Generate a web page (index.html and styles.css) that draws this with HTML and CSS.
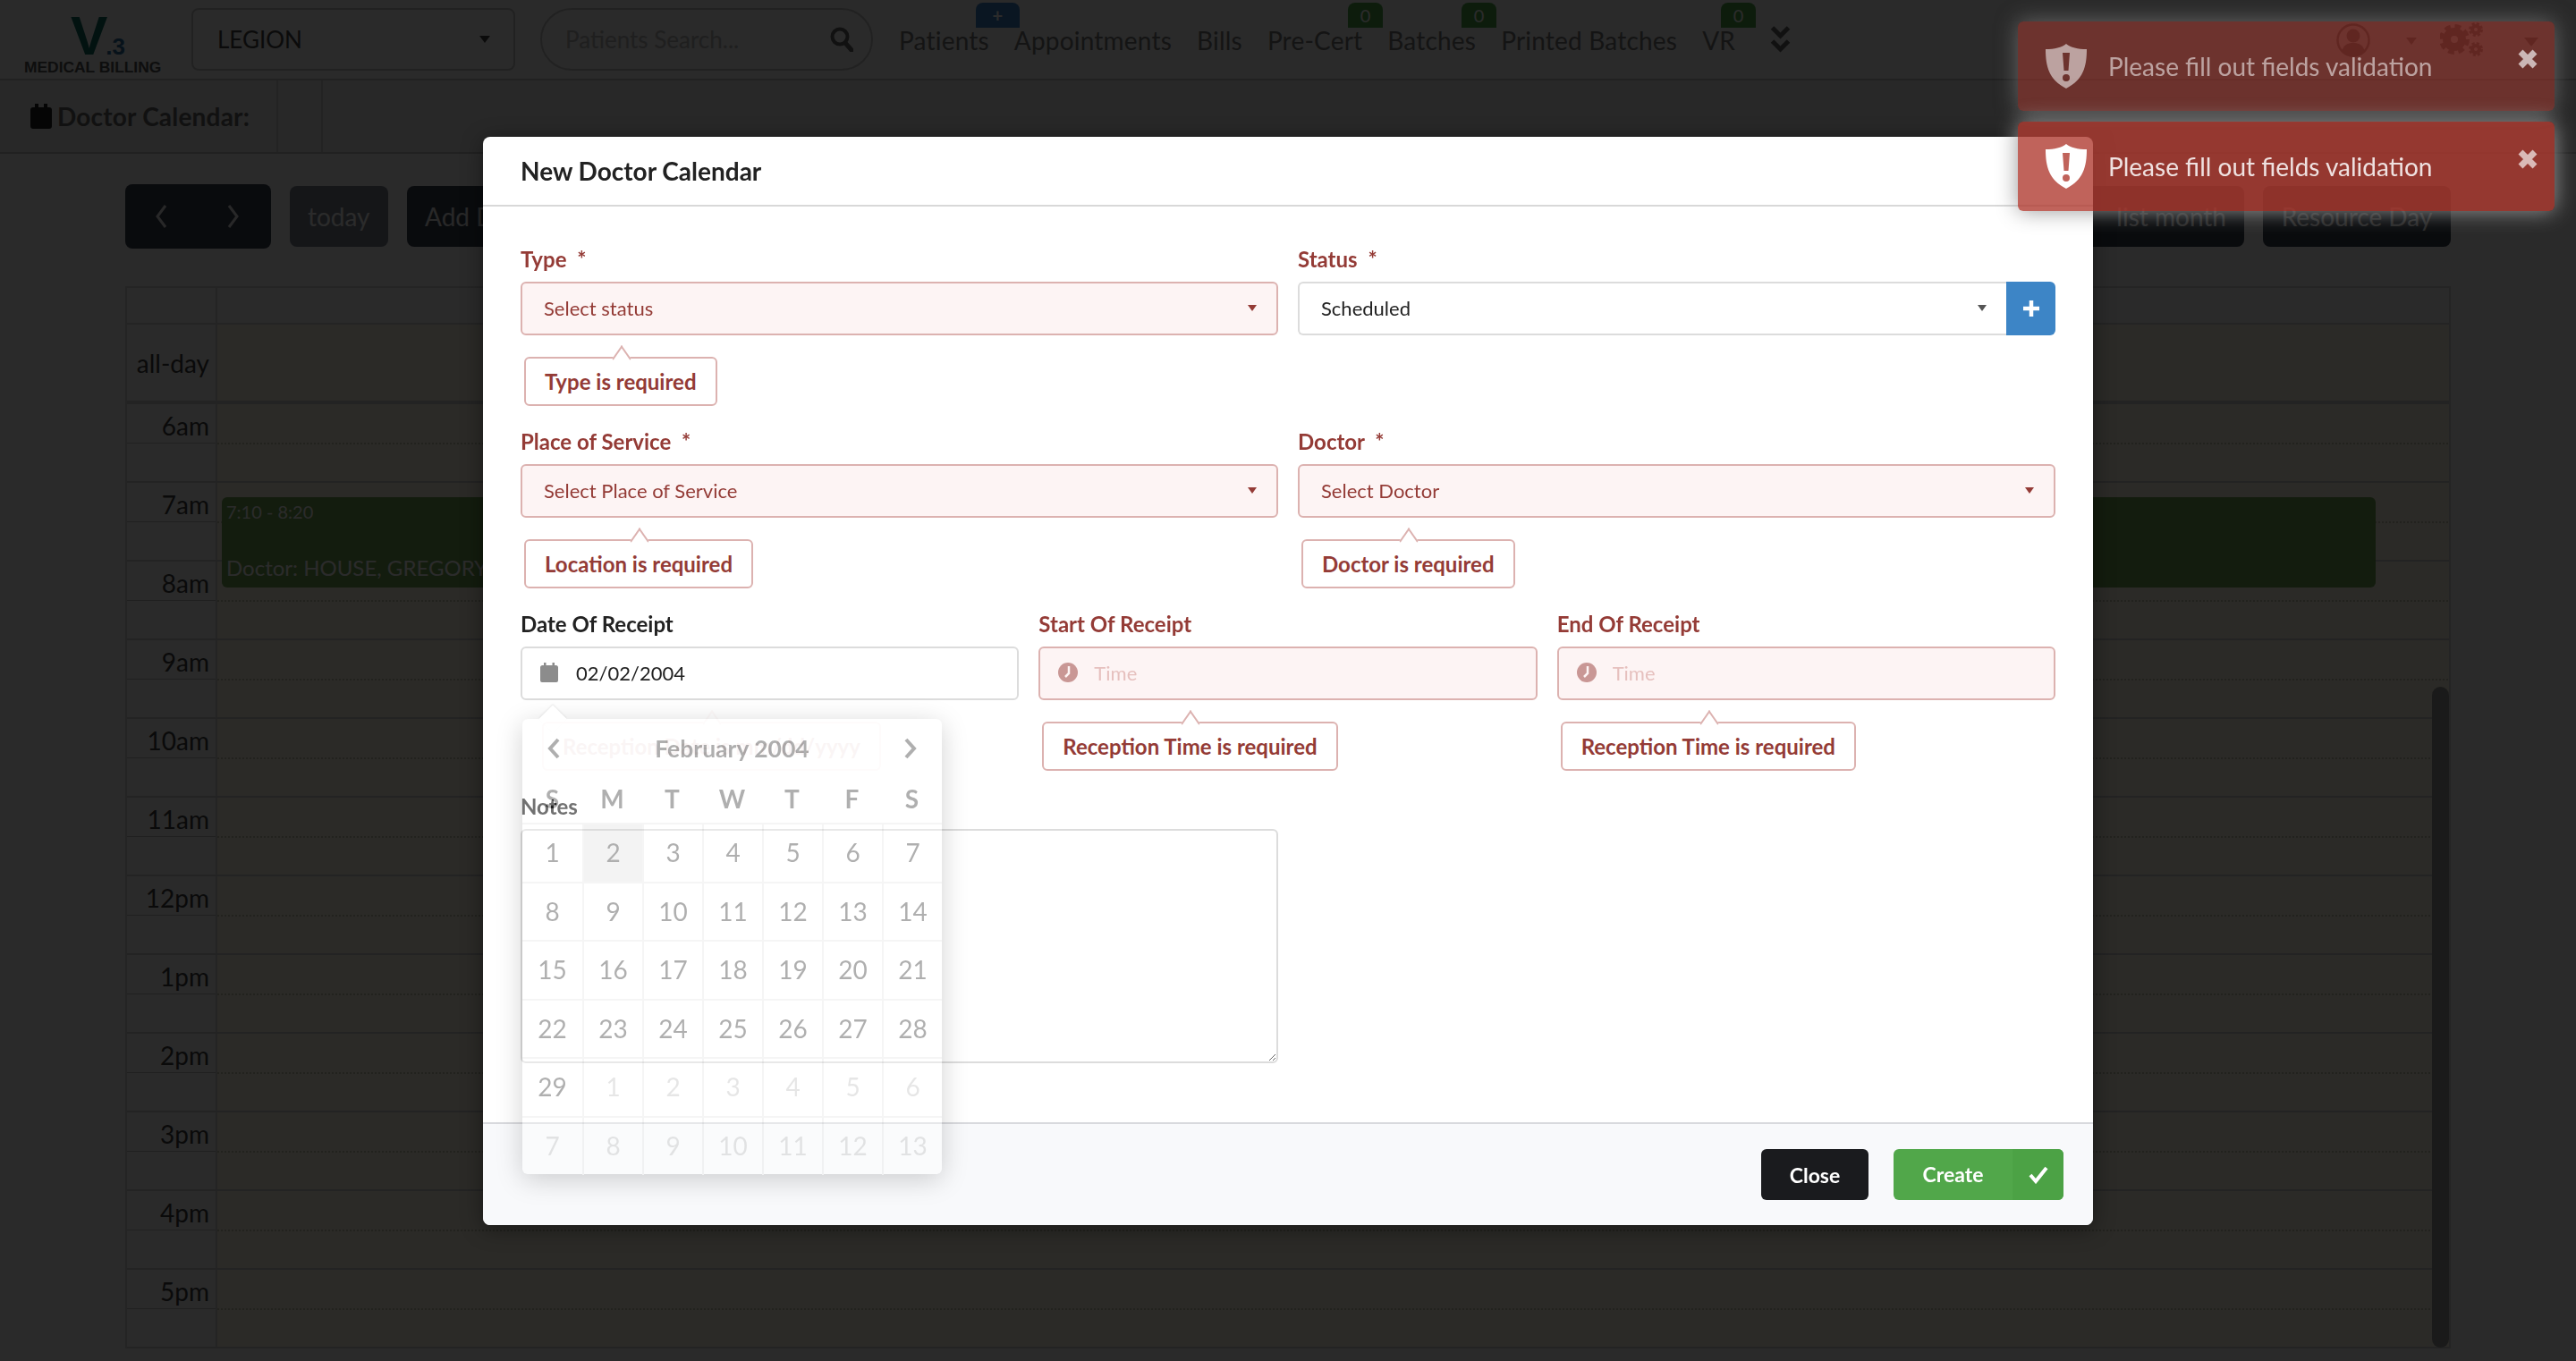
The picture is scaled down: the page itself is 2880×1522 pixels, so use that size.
FILE: index.html
```html
<!DOCTYPE html>
<html lang="en">

<head>
    <meta charset="UTF-8" />
    <title>Doctor Calendar</title>
    <link rel="stylesheet" href="styles.css">
</head>

<body>

    <!-- Top navigation -->
    <header class="topbar">
        <div class="logo">
            <div class="logo-mark">V<span class="logo-version">.3</span></div>
            <div class="logo-name">MEDICAL BILLING</div>
        </div>
        <div class="clinic-select">LEGION<span class="caret"></span></div>
        <div class="patient-search">
            <span>Patients Search...</span>
            <svg class="search-icon" viewBox="0 0 26 28"><circle cx="11" cy="11" r="8.5" fill="none" stroke="currentColor" stroke-width="4"/><path d="M17 18l7 8" stroke="currentColor" stroke-width="5" stroke-linecap="round"/></svg>
        </div>
        <nav class="main-nav">
            <a class="nav-item">Patients<span class="badge badge-blue">+</span></a>
            <a class="nav-item">Appointments</a>
            <a class="nav-item">Bills</a>
            <a class="nav-item">Pre-Cert<span class="badge badge-green">0</span></a>
            <a class="nav-item">Batches<span class="badge badge-green">0</span></a>
            <a class="nav-item">Printed Batches</a>
            <a class="nav-item">VR<span class="badge badge-green">0</span></a>
            <svg class="nav-more" viewBox="0 0 22 30"><path d="M2 2l9 9 9-9M2 17l9 9 9-9" fill="none" stroke="currentColor" stroke-width="5"/></svg>
        </nav>
        <div class="user-tools">
            <svg class="avatar" viewBox="0 0 38 38"><circle cx="19" cy="19" r="17.5" fill="none" stroke="currentColor" stroke-width="2.5"/><circle cx="19" cy="14" r="7.5" fill="currentColor"/><path d="M6 32c2-8 7-10 13-10s11 2 13 10c-7 6-19 6-26 0z" fill="currentColor"/></svg>
            <span class="caret caret-tools"></span>
            <svg class="gears" viewBox="0 0 48 38">
                <circle cx="16" cy="19" r="8.500" fill="none" stroke="currentColor" stroke-width="9"/>
                <circle cx="16" cy="19" r="14" fill="none" stroke="currentColor" stroke-width="6" stroke-dasharray="6.500 4.500"/>
                <circle cx="40" cy="8" r="4" fill="none" stroke="currentColor" stroke-width="4"/>
                <circle cx="40" cy="8" r="6.500" fill="none" stroke="currentColor" stroke-width="3" stroke-dasharray="3 2.100"/>
                <circle cx="40" cy="30" r="4" fill="none" stroke="currentColor" stroke-width="4"/>
                <circle cx="40" cy="30" r="6.500" fill="none" stroke="currentColor" stroke-width="3" stroke-dasharray="3 2.100"/>
            </svg>
            <span class="caret caret-gears"></span>
        </div>
    </header>

    <div class="subbar">
        <div class="subbar-title">
            <svg class="subbar-icon" viewBox="0 0 24 28"><path d="M5 0h4v4h6V0h4v4h2a3 3 0 0 1 3 3v18a3 3 0 0 1-3 3H3a3 3 0 0 1-3-3V7a3 3 0 0 1 3-3h2z" fill="currentColor"/></svg>
            Doctor Calendar:
        </div>
        <div class="subbar-cell"></div>
    </div>

    <!-- Calendar behind the dialog -->
    <main class="calendar-page">
        <div class="toolbar">
            <div class="toolbar-left">
                <div class="btn-pager">
                    <svg viewBox="0 0 14 28"><path d="M12 2L3 14l9 12" fill="none" stroke="currentColor" stroke-width="3"/></svg>
                    <svg viewBox="0 0 14 28"><path d="M2 2l9 12-9 12" fill="none" stroke="currentColor" stroke-width="3"/></svg>
                </div>
                <div class="cal-btn cal-btn-muted">today</div>
                <div class="cal-btn">Add Doctor Calendar</div>
            </div>
            <div class="toolbar-right">
                <div class="cal-btn cal-btn-month">list month</div>
                <div class="cal-btn cal-btn-resource">Resource Day</div>
            </div>
        </div>

        <div class="cal-grid">
            <div class="cal-head"><div class="axis"></div><div class="cal-head-day"></div></div>
            <div class="cal-allday"><div class="axis axis-allday">all-day</div><div class="today-col"></div></div>
            <div class="cal-divider"></div>
            <div class="cal-body">
                <div class="hour"><div class="axis">6am</div><div class="today-col"></div></div>
                <div class="hour"><div class="axis">7am</div><div class="today-col"></div></div>
                <div class="hour"><div class="axis">8am</div><div class="today-col"></div></div>
                <div class="hour"><div class="axis">9am</div><div class="today-col"></div></div>
                <div class="hour"><div class="axis">10am</div><div class="today-col"></div></div>
                <div class="hour"><div class="axis">11am</div><div class="today-col"></div></div>
                <div class="hour"><div class="axis">12pm</div><div class="today-col"></div></div>
                <div class="hour"><div class="axis">1pm</div><div class="today-col"></div></div>
                <div class="hour"><div class="axis">2pm</div><div class="today-col"></div></div>
                <div class="hour"><div class="axis">3pm</div><div class="today-col"></div></div>
                <div class="hour"><div class="axis">4pm</div><div class="today-col"></div></div>
                <div class="hour"><div class="axis">5pm</div><div class="today-col"></div></div>
                <div class="cal-event">
                    <div class="event-time">7:10 - 8:20</div>
                    <div class="event-title">Doctor: HOUSE, GREGORY</div>
                </div>
                <div class="cal-scroll"></div>
            </div>
        </div>
    </main>

    <div class="backdrop"></div>

    <!-- Dialog -->
    <section class="modal">
        <h2 class="modal-title">New Doctor Calendar</h2>

        <div class="modal-body">
            <div class="form-row">
                <div class="field has-error">
                    <label>Type <em>*</em></label>
                    <div class="control">Select status<span class="caret"></span></div>
                    <div class="field-tip">Type is required</div>
                </div>
                <div class="field">
                    <label class="label-error">Status <em>*</em></label>
                    <div class="control-group">
                        <div class="control">Scheduled<span class="caret"></span></div>
                        <div class="btn-add">
                            <svg viewBox="0 0 20 20"><path d="M10 1v18M1 10h18" stroke="currentColor" stroke-width="4.500"/></svg>
                        </div>
                    </div>
                </div>
            </div>

            <div class="form-row">
                <div class="field has-error">
                    <label>Place of Service <em>*</em></label>
                    <div class="control">Select Place of Service<span class="caret"></span></div>
                    <div class="field-tip">Location is required</div>
                </div>
                <div class="field has-error">
                    <label>Doctor <em>*</em></label>
                    <div class="control">Select Doctor<span class="caret"></span></div>
                    <div class="field-tip">Doctor is required</div>
                </div>
            </div>

            <div class="form-row form-row-3">
                <div class="field">
                    <label>Date Of Receipt</label>
                    <div class="control control-icon">
                        <svg class="field-icon" viewBox="0 0 20 22"><path d="M4 0h2.500v3h7V0H16v3h1.500A2.500 2.500 0 0 1 20 5.500V20a2 2 0 0 1-2 2H2a2 2 0 0 1-2-2V5.500A2.500 2.500 0 0 1 2.500 3H4z" fill="currentColor"/></svg>
                        02/02/2004
                    </div>
                    <div class="field-tip field-tip-hidden">Reception Date is mm/dd/yyyy</div>
                </div>
                <div class="field has-error">
                    <label>Start Of Receipt</label>
                    <div class="control control-icon control-time">
                        <svg class="field-icon clock-icon" viewBox="0 0 22 22"><circle cx="11" cy="11" r="11" fill="currentColor"/><path d="M12 4v8l-4 4" fill="none" stroke="#fdf4f4" stroke-width="2.500"/></svg>
                        Time
                    </div>
                    <div class="field-tip">Reception Time is required</div>
                </div>
                <div class="field has-error">
                    <label>End Of Receipt</label>
                    <div class="control control-icon control-time">
                        <svg class="field-icon clock-icon" viewBox="0 0 22 22"><circle cx="11" cy="11" r="11" fill="currentColor"/><path d="M12 4v8l-4 4" fill="none" stroke="#fdf4f4" stroke-width="2.500"/></svg>
                        Time
                    </div>
                    <div class="field-tip">Reception Time is required</div>
                </div>
            </div>

            <div class="form-row">
                <div class="field">
                    <label>Notes</label>
                    <textarea class="notes"></textarea>
                </div>
                <div class="field"></div>
            </div>
        </div>

        <footer class="modal-footer">
            <button class="btn-close">Close</button>
            <button class="btn-create">
                <span class="btn-create-label">Create</span>
                <span class="btn-create-icon">
                    <svg viewBox="0 0 22 20"><path d="M2 10l6 7L20 2" fill="none" stroke="currentColor" stroke-width="4"/></svg>
                </span>
            </button>
        </footer>

        <!-- Date picker, fading in -->
        <div class="datepicker">
            <div class="dp-head">
                <svg viewBox="0 0 14 24"><path d="M12 2L3 12l9 10" fill="none" stroke="currentColor" stroke-width="4"/></svg>
                <span>February 2004</span>
                <svg viewBox="0 0 14 24"><path d="M2 2l9 10-9 10" fill="none" stroke="currentColor" stroke-width="4"/></svg>
            </div>
            <div class="dp-week">
                <span>S</span><span>M</span><span>T</span><span>W</span><span>T</span><span>F</span><span>S</span>
            </div>
            <div class="dp-days">
                <span>1</span><span class="dp-selected">2</span><span>3</span><span>4</span><span>5</span><span>6</span><span>7</span>
                <span>8</span><span>9</span><span>10</span><span>11</span><span>12</span><span>13</span><span>14</span>
                <span>15</span><span>16</span><span>17</span><span>18</span><span>19</span><span>20</span><span>21</span>
                <span>22</span><span>23</span><span>24</span><span>25</span><span>26</span><span>27</span><span>28</span>
                <span>29</span><span class="dp-off">1</span><span class="dp-off">2</span><span class="dp-off">3</span><span class="dp-off">4</span><span class="dp-off">5</span><span class="dp-off">6</span>
                <span class="dp-off">7</span><span class="dp-off">8</span><span class="dp-off">9</span><span class="dp-off">10</span><span class="dp-off">11</span><span class="dp-off">12</span><span class="dp-off">13</span>
            </div>
        </div>
    </section>

    <!-- Toasts -->
    <div class="toasts">
        <div class="toast toast-old">
            <svg class="toast-icon" viewBox="0 0 46 50"><path fill-rule="evenodd" d="M23 0c5 4 13 6 23 6 0 20-4 34-23 44C4 40 0 26 0 6c10 0 18-2 23-6zM19 10l1.500 20h5L27 10zM23 34a4 4 0 1 0 0 8 4 4 0 0 0 0-8z" fill="currentColor"/></svg>
            <span class="toast-text">Please fill out fields validation</span>
            <svg class="toast-close" viewBox="0 0 24 24"><path d="M4 4l16 16M20 4L4 20" stroke="currentColor" stroke-width="7"/></svg>
        </div>
        <div class="toast">
            <svg class="toast-icon" viewBox="0 0 46 50"><path fill-rule="evenodd" d="M23 0c5 4 13 6 23 6 0 20-4 34-23 44C4 40 0 26 0 6c10 0 18-2 23-6zM19 10l1.500 20h5L27 10zM23 34a4 4 0 1 0 0 8 4 4 0 0 0 0-8z" fill="currentColor"/></svg>
            <span class="toast-text">Please fill out fields validation</span>
            <svg class="toast-close" viewBox="0 0 24 24"><path d="M4 4l16 16M20 4L4 20" stroke="currentColor" stroke-width="7"/></svg>
        </div>
    </div>

</body>

</html>
```

FILE: styles.css
```css
* {
    box-sizing: border-box;
}

html, body {
    margin: 0;
    height: 1522px;
    overflow: hidden;
}

body {
    font-family: Lato, "Noto Sans", sans-serif;
    font-size: 28px;
    background: #f7f7f7;
    color: #666;
}

.caret {
    width: 0;
    height: 0;
    border-left: 6px solid transparent;
    border-right: 6px solid transparent;
    border-top: 8px solid currentColor;
    margin-left: auto;
}

/* Top navigation */
.topbar {
    display: flex;
    align-items: center;
    height: 90px;
    border-bottom: 2px solid #c4c4c4;
    position: relative;
}

.logo {
    width: 214px;
    padding-left: 27px;
    flex: none;
    line-height: 1;
}

.logo-mark {
    font-family: "Liberation Sans", sans-serif;
    font-weight: bold;
    font-size: 62px;
    height: 44px;
    padding-left: 52px;
    color: #0f6a62;
    margin-top: 14px;
    line-height: 44px;
}

.logo-version {
    font-size: 26px;
    color: #2a6a9c;
    margin-left: -2px;
}

.logo-name {
    font-family: "Liberation Sans", sans-serif;
    font-weight: bold;
    font-size: 17.400px;
    color: #555;
    white-space: nowrap;
    margin-top: 5px;
}

.clinic-select {
    display: flex;
    align-items: center;
    width: 362px;
    height: 70px;
    padding: 0 26px 0 27px;
    border: 2px solid #c4c4c4;
    border-radius: 8px;
    font-size: 26px;
    color: #444;
    flex: none;
}

.patient-search {
    display: flex;
    align-items: center;
    justify-content: space-between;
    width: 372px;
    height: 70px;
    margin-left: 28px;
    padding: 0 20px 0 26px;
    border: 2px solid #c4c4c4;
    border-radius: 35px;
    font-size: 26px;
    color: #b5b5b5;
    flex: none;
}

.search-icon {
    width: 26px;
    height: 28px;
    color: #666;
}

.main-nav {
    display: flex;
    align-items: center;
    gap: 28px;
    margin-left: 29px;
    letter-spacing: .2px;
}

.nav-item {
    position: relative;
    color: #777;
    margin-top: 2px;
}

.badge {
    position: absolute;
    top: -25px;
    height: 28px;
    min-width: 39px;
    font-size: 20px;
    line-height: 28px;
    text-align: center;
    color: #fff;
    border-radius: 8px 8px 0 0;
}

.badge-blue {
    background: #3d85c6;
    width: 49px;
    right: -34px;
    font-weight: bold;
}

.badge-green {
    background: #4ca74a;
    right: -23px;
}

.nav-more {
    width: 25px;
    height: 30px;
    color: #666;
    margin: 0 0 0 10px;
}

.user-tools {
    position: absolute;
    left: 2612px;
    top: 25px;
    display: flex;
    align-items: flex-start;
    color: #666;
}

.avatar {
    width: 38px;
    height: 38px;
    margin-top: 1px;
}

.caret-tools {
    margin: 17px 0 0 40px;
}

.gears {
    width: 48px;
    height: 38px;
    margin-left: 26px;
}

.caret-gears {
    margin: 17px 0 0 46px;
    border-left-width: 8px;
    border-right-width: 8px;
    border-top-width: 10px;
}

.subbar {
    display: flex;
    height: 82px;
    border-bottom: 2px solid #c4c4c4;
    background: #ececec;
}

.subbar-title {
    display: flex;
    align-items: center;
    gap: 6px;
    width: 311px;
    padding-left: 34px;
    font-weight: bold;
    letter-spacing: .2px;
    color: #666;
    border-right: 2px solid #d0d0d0;
}

.subbar-icon {
    width: 24px;
    height: 28px;
    color: #222;
}

.subbar-cell {
    width: 50px;
    border-right: 2px solid #d0d0d0;
}

/* Calendar */
.calendar-page {
    padding: 34px 140px 0;
}

.toolbar {
    display: flex;
    justify-content: space-between;
    align-items: center;
    height: 72px;
    margin-bottom: 42px;
}

.toolbar-left, .toolbar-right {
    display: flex;
    align-items: center;
    gap: 21px;
}

.btn-pager {
    display: flex;
    align-items: center;
    justify-content: space-between;
    width: 163px;
    height: 72px;
    padding: 0 35px 0 33px;
    background: #3a4250;
    border-radius: 8px;
    color: #fff;
}

.btn-pager svg {
    width: 14px;
    height: 28px;
    opacity: .9;
}

.cal-btn {
    height: 68px;
    line-height: 68px;
    padding: 0 20px;
    background: #3a4250;
    border-radius: 8px;
    color: #eee;
    white-space: nowrap;
}

.cal-btn-muted {
    width: 110px;
    background: #7b8290;
    color: #fff;
}

.cal-btn-month {
    width: 260px;
    text-align: right;
}

.cal-btn-resource {
    width: 210px;
    text-align: center;
    padding: 0;
}

.cal-grid {
    border: 2px solid #d4d4d4;
    border-bottom: 0;
}

.cal-head, .cal-allday, .hour {
    display: flex;
}

.axis {
    width: 101px;
    flex: none;
    padding-right: 7px;
    text-align: right;
    color: #3c3c3c;
    border-right: 2px solid #d4d4d4;
}

.cal-head {
    height: 41px;
    border-bottom: 2px solid #d4d4d4;
}

.cal-allday {
    height: 85px;
    font-size: 28px;
}

.axis-allday {
    line-height: 87px;
}

.today-col {
    flex: 1;
    background: #fcf8e3;
}

.cal-divider {
    height: 4px;
    background: #d0d0d0;
}

.cal-body {
    position: relative;
}

.hour {
    height: 88px;
    border-bottom: 2px solid #cfcfcf;
    background-image: linear-gradient(#bbb 50%, transparent 50%);
    background-size: 100% 2px;
    background-repeat: no-repeat;
    background-position: 0 43px;
}

.hour .axis {
    line-height: 48px;
}

.hour .today-col {
    background-image: repeating-linear-gradient(90deg, #c9c6b4 0 2px, transparent 2px 4px);
    background-size: 100% 2px;
    background-repeat: no-repeat;
    background-position: 0 43px;
}

.cal-event {
    position: absolute;
    left: 106px;
    top: 104px;
    width: 2408px;
    height: 101px;
    padding: 4px 5px;
    background: #70a552;
    border-radius: 6px;
    color: #fff;
    white-space: nowrap;
}

.event-time {
    font-size: 20px;
    line-height: 24px;
}

.event-title {
    font-size: 24px;
    margin-top: 34px;
    line-height: 34px;
}

.cal-scroll {
    position: absolute;
    left: 2577px;
    top: 316px;
    width: 19px;
    height: 739px;
    background: #9a9a9a;
    border-radius: 10px;
}

.backdrop {
    position: fixed;
    inset: 0;
    background: rgba(0, 0, 0, .83);
}

/* Dialog */
.modal {
    position: absolute;
    left: 540px;
    top: 153px;
    width: 1800px;
    height: 1217px;
    display: flex;
    flex-direction: column;
    background: #fff;
    border-radius: 8px;
    box-shadow: 0 4px 24px rgba(0, 0, 0, .4);
}

.modal-title {
    margin: 0;
    height: 78px;
    padding: 0 42px;
    line-height: 76px;
    font-size: 28px;
    font-weight: bold;
    color: #222;
    border-bottom: 2px solid #d8d8d8;
}

.modal-body {
    flex: 1;
    padding: 44px 42px 0;
}

.form-row {
    display: grid;
    grid-template-columns: 1fr 1fr;
    column-gap: 22px;
    height: 204px;
}

.form-row-3 {
    grid-template-columns: 1fr 1fr 1fr;
}

.field {
    position: relative;
}

.field label {
    display: block;
    height: 40px;
    font-size: 24px;
    font-weight: bold;
    line-height: 30px;
    color: #222;
}

.field label em {
    font-style: normal;
    margin-left: 6px;
}

.field .label-error, .field.has-error label {
    color: #943b36;
}

.control {
    display: flex;
    align-items: center;
    flex: 1;
    height: 60px;
    padding: 0 24px 2px;
    border: 2px solid #dcdcdc;
    border-radius: 6px;
    font-size: 22px;
    color: #222;
}

.has-error .control {
    border-color: #dcb2b0;
    background: #fdf4f4;
    color: #943b36;
}

.control .caret {
    border-left-width: 5px;
    border-right-width: 5px;
    border-top-width: 7px;
    color: #555;
    margin-right: -2px;
}

.has-error .control .caret {
    color: #943b36;
}

.control-group {
    display: flex;
}

.control-group .control {
    border-radius: 6px 0 0 6px;
    border-right: 0;
}

.btn-add {
    display: flex;
    align-items: center;
    justify-content: center;
    width: 55px;
    height: 60px;
    background: #3d85c6;
    color: #fff;
    border-radius: 0 6px 6px 0;
}

.btn-add svg {
    width: 20px;
    height: 20px;
}

.control-icon {
    padding-left: 20px;
}

.field-icon {
    width: 20px;
    height: 22px;
    margin-right: 20px;
    color: #8c8c8c;
    flex: none;
}

.clock-icon {
    width: 22px;
    margin-right: 18px;
}

.has-error .field-icon {
    color: #c99795;
}

.has-error .control-time {
    color: #e6c0be;
}

.field-tip {
    position: relative;
    display: inline-block;
    height: 55px;
    margin: 24px 0 0 4px;
    padding: 0 21px;
    line-height: 51px;
    font-size: 24px;
    font-weight: bold;
    color: #943b36;
    background: #fff;
    border: 2px solid #dcb2b0;
    border-radius: 6px;
}

/* little arrow on top of the tip */
.field-tip::before {
    content: "";
    position: absolute;
    left: 50%;
    top: -9px;
    width: 16px;
    height: 16px;
    margin-left: -8px;
    background: #fff;
    border-left: 2px solid #dcb2b0;
    border-top: 2px solid #dcb2b0;
    transform: rotate(45deg) skew(10deg, 10deg);
}

.field-tip-hidden {
    margin-left: 24px;
    opacity: .08;
}

.notes {
    display: block;
    width: 100%;
    height: 262px;
    border: 2px solid #dcdcdc;
    border-radius: 6px;
    background: transparent;
    outline: none;
}

.modal-footer {
    display: flex;
    justify-content: flex-end;
    align-items: center;
    gap: 28px;
    height: 115px;
    padding: 0 33px 0 0;
    background: #f8f9fb;
    border-top: 2px solid #d8d9dd;
    border-radius: 0 0 8px 8px;
}

.modal-footer button {
    height: 57px;
    border: 0;
    border-radius: 6px;
    font-family: inherit;
    font-size: 23px;
    font-weight: bold;
    color: #fff;
    padding: 0;
}

.btn-close {
    width: 120px;
    background: #1a1b1e;
}

.btn-create {
    display: flex;
    width: 190px;
    background: #51a74a;
    overflow: hidden;
}

.btn-create-label {
    width: 133px;
    line-height: 57px;
}

.btn-create-icon {
    display: flex;
    align-items: center;
    justify-content: center;
    width: 57px;
    height: 57px;
    background: #4ca245;
}

.btn-create-icon svg {
    width: 22px;
    height: 20px;
}

/* Date picker */
.datepicker {
    position: absolute;
    left: 44px;
    top: 651px;
    width: 469px;
    height: 509px;
    background: #fff;
    border-radius: 6px;
    box-shadow: 0 6px 30px rgba(0, 0, 0, .5);
    opacity: .36;
    color: #222;
}

.datepicker::before {
    content: "";
    position: absolute;
    left: 23px;
    top: -11px;
    width: 22px;
    height: 22px;
    background: #fff;
    transform: rotate(45deg);
    box-shadow: -1px -1px 2px rgba(0, 0, 0, .2);
}

.dp-head {
    position: relative;
    display: flex;
    align-items: center;
    justify-content: space-between;
    height: 66px;
    padding: 0 27px 0 27px;
    font-weight: bold;
    font-size: 26.500px;
}

.dp-head svg {
    width: 16px;
    height: 24px;
}

.dp-week, .dp-days {
    display: grid;
    grid-template-columns: repeat(7, 1fr);
    text-align: center;
}

.dp-week {
    height: 50px;
    line-height: 46px;
    font-weight: bold;
    font-size: 28px;
}

.dp-days span {
    height: 65.600px;
    line-height: 62px;
    font-size: 28px;
    border-top: 2px solid #e4e4e4;
    border-left: 2px solid #e4e4e4;
}

.dp-days span:nth-child(7n+1) {
    border-left: 0;
}

.dp-days .dp-selected {
    background: #ddd;
}

.dp-days .dp-off {
    color: #bbb;
}

/* Toasts */
.toasts {
    position: absolute;
    left: 2256px;
    top: 24px;
    width: 600px;
    display: flex;
    flex-direction: column;
    gap: 12px;
}

.toast {
    position: relative;
    display: flex;
    align-items: center;
    height: 100px;
    padding-left: 31px;
    background: rgba(176, 60, 50, .8);
    border-radius: 6px;
    box-shadow: 0 0 24px #999;
    color: #fff;
}

.toast-old {
    background: rgba(176, 60, 50, .5);
    box-shadow: 0 0 24px rgba(153, 153, 153, .55);
}

.toast-old .toast-icon, .toast-old .toast-text, .toast-old .toast-close {
    opacity: .55;
}

.toast-icon {
    width: 46px;
    height: 50px;
    flex: none;
}

.toast-text {
    margin-left: 24px;
    font-size: 28px;
    opacity: .85;
}

.toast .toast-close {
    position: absolute;
    right: 18px;
    top: 30px;
    width: 24px;
    height: 24px;
    opacity: .65;
}
```
